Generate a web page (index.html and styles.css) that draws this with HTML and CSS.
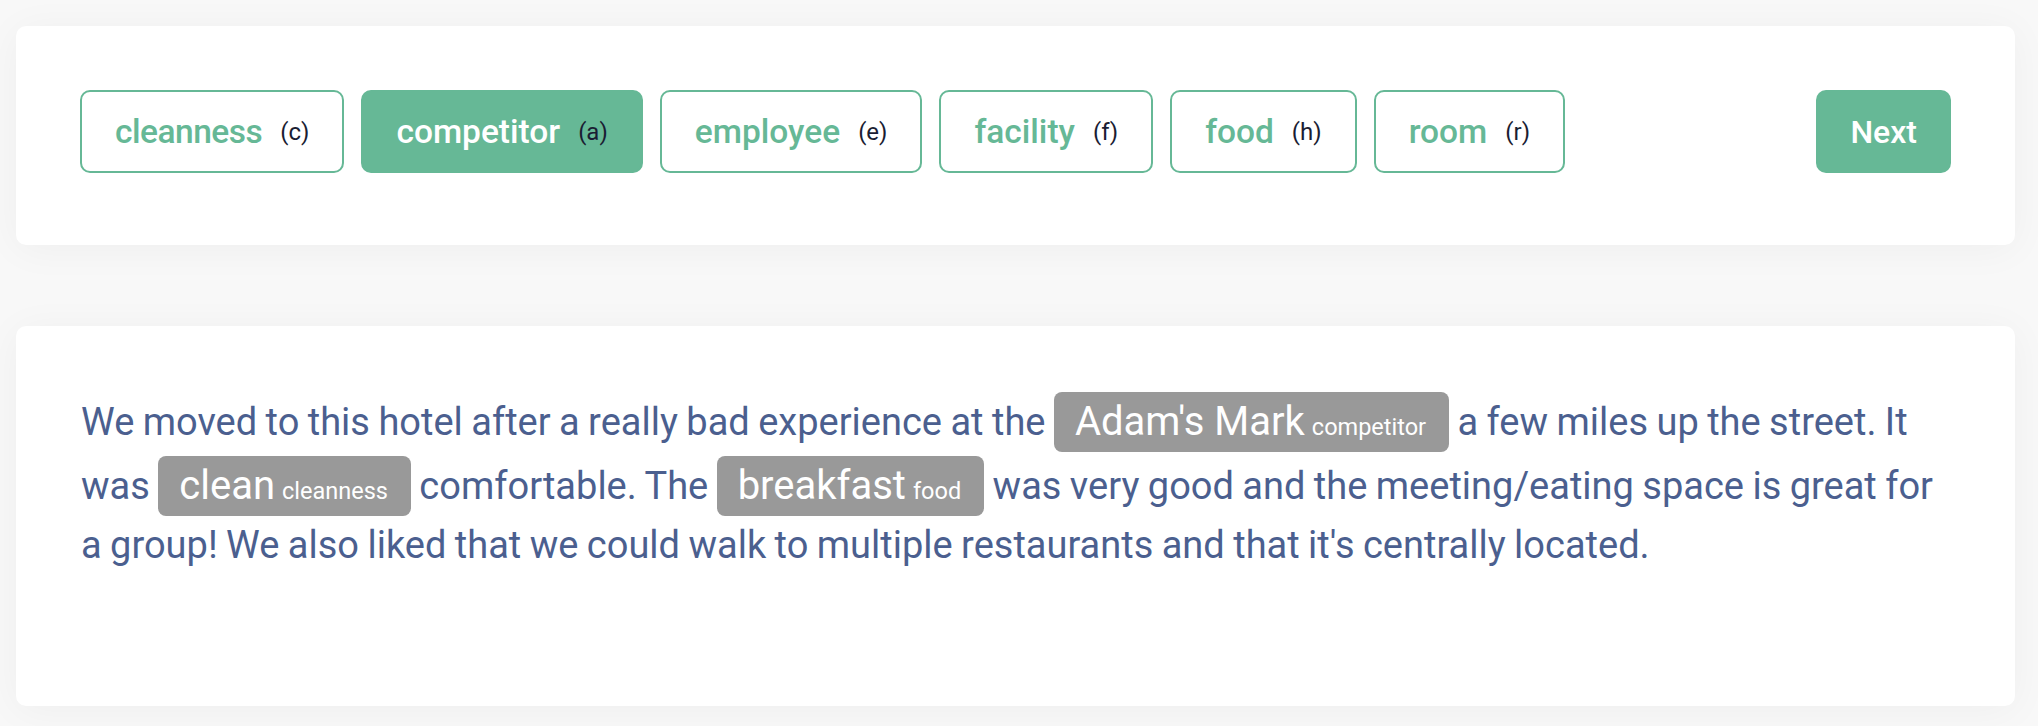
FILE: index.html
```html
<!DOCTYPE html>
<html lang="en">
<head>
<meta charset="utf-8">
<title>Annotator</title>
<link rel="stylesheet" href="styles.css">
</head>
<body>
  <div class="page">
    <section class="card toolbar">
      <div class="labels">
        <button class="label-btn"><span class="name">cleanness</span><span class="key">(c)</span></button>
        <button class="label-btn active"><span class="name">competitor</span><span class="key">(a)</span></button>
        <button class="label-btn"><span class="name">employee</span><span class="key">(e)</span></button>
        <button class="label-btn"><span class="name">facility</span><span class="key">(f)</span></button>
        <button class="label-btn"><span class="name">food</span><span class="key">(h)</span></button>
        <button class="label-btn"><span class="name">room</span><span class="key">(r)</span></button>
      </div>
      <button class="next-btn">Next</button>
    </section>
    <section class="card review">
      <p class="review-text">We moved to this hotel after a really bad experience at the <span class="tag">Adam's Mark<span class="tag-label">competitor</span></span> a few miles up the street. It was <span class="tag">clean<span class="tag-label">cleanness</span></span> comfortable. The <span class="tag">breakfast<span class="tag-label">food</span></span> was very good and the meeting/eating space is great for a group! We also liked that we could walk to multiple restaurants and that it's centrally located.</p>
    </section>
  </div>
</body>
</html>
```

FILE: styles.css
```css
* { box-sizing: border-box; }

html, body {
  margin: 0;
  padding: 0;
  background: #f8f8f8;
  font-family: Roboto, "Liberation Sans", sans-serif;
}

.page {
  padding: 26px 23px 20px 16px;
  display: flex;
  flex-direction: column;
  gap: 81px;
}

.card {
  background: #ffffff;
  border-radius: 10px;
  box-shadow: 0 4px 40px rgba(0, 0, 0, 0.045);
}

.toolbar {
  display: flex;
  align-items: center;
  padding: 64px 64px 72px 64px;
}

.labels {
  display: flex;
  gap: 17px;
}

.label-btn {
  display: flex;
  align-items: center;
  gap: 18px;
  height: 83px;
  padding: 0 33px;
  border: 2px solid #66b896;
  border-radius: 10px;
  background: #ffffff;
  font-family: inherit;
  cursor: pointer;
}

.label-btn .name {
  font-size: 33.5px;
  font-weight: 500;
  color: #66b896;
}

.label-btn:first-child .name {
  letter-spacing: -0.5px;
}

.label-btn .key {
  font-size: 24px;
  font-weight: 400;
  color: #1a1d33;
}

.label-btn.active {
  background: #66b896;
}

.label-btn.active .name {
  color: #ffffff;
}

.next-btn {
  margin-left: auto;
  height: 83px;
  padding: 0 34px;
  border: none;
  border-radius: 10px;
  background: #66b896;
  color: #ffffff;
  font-family: inherit;
  font-size: 32px;
  font-weight: 500;
  cursor: pointer;
}

.review {
  height: 380px;
  padding: 62px 65px 0 65px;
}

.review-text {
  margin: 0;
  font-size: 38px;
  line-height: 59px;
  word-spacing: -1px;
  color: #4b5f8f;
}

.tag {
  display: inline-block;
  height: 60px;
  line-height: 60px;
  margin-top: 4px;
  padding: 0 23px 0 21px;
  border-radius: 8px;
  background: #999999;
  color: #ffffff;
  font-size: 40px;
  word-spacing: 0;
}

.tag-label {
  font-size: 23.5px;
  margin-left: 7px;
}
```
